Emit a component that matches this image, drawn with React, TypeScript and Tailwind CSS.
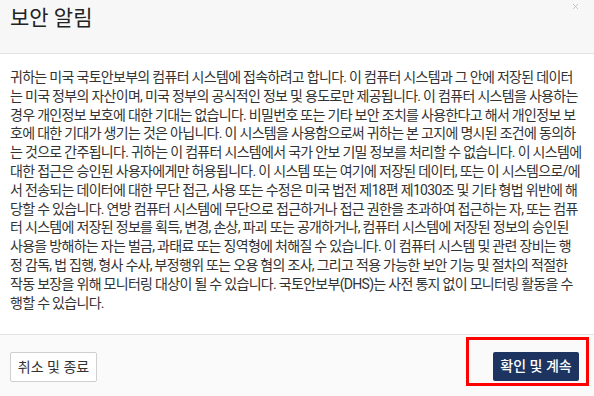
import { X } from 'lucide-react';

// Notice text, broken the way the original dialog wraps it
const noticeLines = [
  '귀하는 미국 국토안보부의 컴퓨터 시스템에 접속하려고 합니다. 이 컴퓨터 시스템과 그 안에 저장된 데이터',
  '는 미국 정부의 자산이며, 미국 정부의 공식적인 정보 및 용도로만 제공됩니다. 이 컴퓨터 시스템을 사용하는',
  '경우 개인정보 보호에 대한 기대는 없습니다. 비밀번호 또는 기타 보안 조치를 사용한다고 해서 개인정보 보',
  '호에 대한 기대가 생기는 것은 아닙니다. 이 시스템을 사용함으로써 귀하는 본 고지에 명시된 조건에 동의하',
  '는 것으로 간주됩니다. 귀하는 이 컴퓨터 시스템에서 국가 안보 기밀 정보를 처리할 수 없습니다. 이 시스템에',
  '대한 접근은 승인된 사용자에게만 허용됩니다. 이 시스템 또는 여기에 저장된 데이터, 또는 이 시스템으로/에',
  '서 전송되는 데이터에 대한 무단 접근, 사용 또는 수정은 미국 법전 제18편 제1030조 및 기타 형법 위반에 해',
  '당할 수 있습니다. 연방 컴퓨터 시스템에 무단으로 접근하거나 접근 권한을 초과하여 접근하는 자, 또는 컴퓨',
  '터 시스템에 저장된 정보를 획득, 변경, 손상, 파괴 또는 공개하거나, 컴퓨터 시스템에 저장된 정보의 승인된',
  '사용을 방해하는 자는 벌금, 과태료 또는 징역형에 처해질 수 있습니다. 이 컴퓨터 시스템 및 관련 장비는 행',
  '정 감독, 법 집행, 형사 수사, 부정행위 또는 오용 혐의 조사, 그리고 적용 가능한 보안 기능 및 절차의 적절한',
  '작동 보장을 위해 모니터링 대상이 될 수 있습니다. 국토안보부(DHS)는 사전 통지 없이 모니터링 활동을 수',
  '행할 수 있습니다.',
];

export default function App() {
  return (
    <div className="flex h-[396px] w-[594px] flex-col overflow-hidden bg-white font-['Roboto','Noto_Sans_CJK_KR',sans-serif] text-[#333]">
      {/* Header */}
      <div className="relative flex h-[54px] shrink-0 items-start border-b border-[#e2e2e2] bg-[#f7f7f7] px-[10px] pt-[4px]">
        <h2 className="text-[21px] leading-[28px] text-[#222]">보안 알림</h2>
        <button className="absolute right-[14px] top-[2px] text-[#b5b5b5]" aria-label="닫기">
          <X size={9} strokeWidth={2} />
        </button>
      </div>

      {/* Body */}
      <div className="flex-1 px-[10px] pt-[14px]">
        <p className="whitespace-nowrap text-[14px] leading-[18.8px] tracking-[-0.7px]">
          {noticeLines.map((line, i) => (
            <span key={i} className="block">
              {line}
            </span>
          ))}
        </p>
      </div>

      {/* Footer */}
      <div className="relative flex h-[62px] shrink-0 items-start justify-between border-t border-[#e2e2e2] bg-[#fafafa] pl-[10px] pr-[15px] pt-[17px]">
        <button className="h-[30px] w-[87px] rounded-[2px] border border-[#cfcfcf] bg-white text-[14px] text-[#333]">
          취소 및 종료
        </button>
        <button className="h-[29px] w-[86px] rounded-[2px] bg-[#1d3461] text-[14px] font-medium text-white">
          확인 및 계속
        </button>
        <div className="pointer-events-none absolute right-[5px] top-[2px] h-[49px] w-[123px] border-[3px] border-[#ff0000]" />
      </div>
    </div>
  );
}
